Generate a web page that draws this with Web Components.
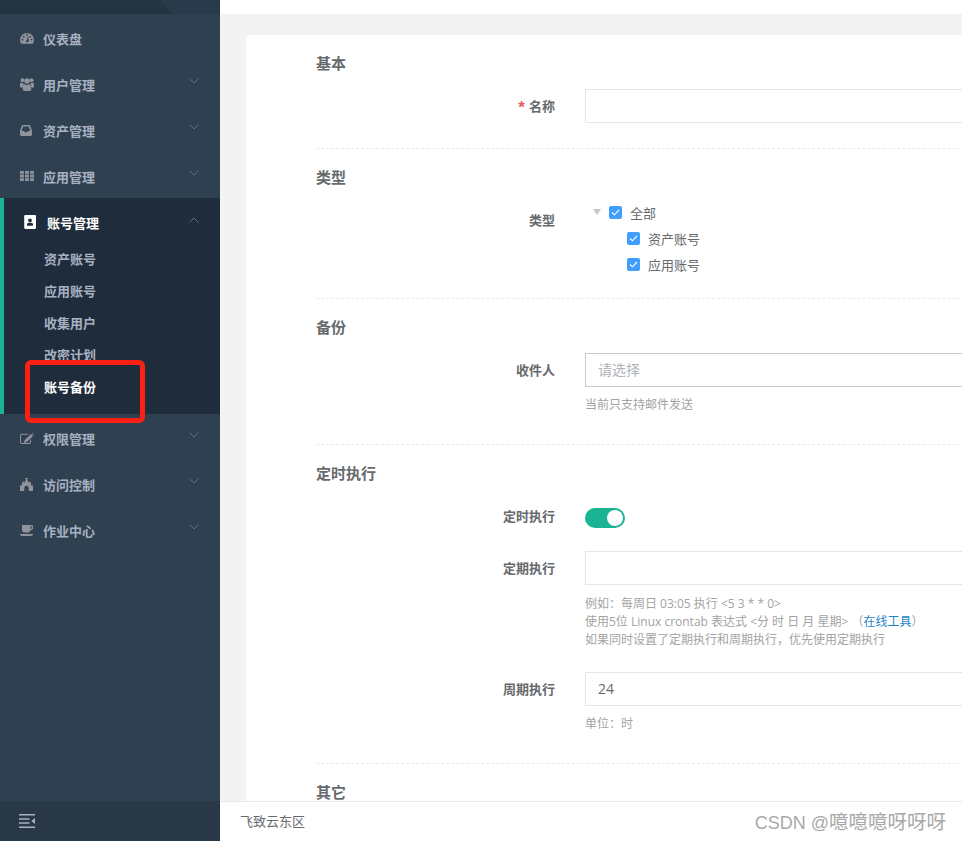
<!DOCTYPE html>
<html lang="zh">
<head>
<meta charset="utf-8">
<title>账号备份</title>
<style>
  html, body { margin: 0; height: 100%; overflow: hidden; background: #f3f3f4; }
  body { font-family: "Open Sans", "Noto Sans CJK SC", sans-serif; font-size: 13px; color: #676a6c; }
</style>
</head>
<body>
<template id="ico-dash"><svg viewBox="0 0 14 11" width="14" height="11" fill="currentColor"><path fill-rule="evenodd" d="M7 0a7 7 0 0 0-7 7c0 1.300.3 2.400 1 3.400.1.200.3.300.5.300h11c.2 0 .4-.1.500-.3.7-1 1-2.100 1-3.400a7 7 0 0 0-7-7zM2.500 7.600a.9.9 0 1 1 0-1.800.9.9 0 0 1 0 1.800zm1.300-3a.9.9 0 1 1 0-1.800.9.9 0 0 1 0 1.800zM7 2.600a.9.9 0 1 1 0-1.800.9.9 0 0 1 0 1.800zm1.100 6.300a1.200 1.200 0 0 1-2.100-.8c0-.5.4-.9.8-1.100l1-3.600h.7l-.1 3.700c.3.3.5.600.5 1 0 .3-.3.600-.8.800zm2.100-4.300a.9.9 0 1 1 0-1.800.9.9 0 0 1 0 1.800zm1.300 3a.9.9 0 1 1 0-1.800.9.9 0 0 1 0 1.800z"/></svg></template>
<template id="ico-users"><svg viewBox="0 0 14 13" width="14" height="13" fill="currentColor"><circle cx="2.500" cy="2.200" r="2"/><circle cx="11.500" cy="2.200" r="2"/><circle cx="7" cy="3" r="2.700"/><path d="M0 5h3.300c-.2 1 .3 2 1 2.600C3 8 2.300 8.800 2.200 9.800H1.200C.5 9.800 0 9.300 0 8.600zM14 5h-3.300c.2 1-.3 2-1 2.600 1.300.4 2 1.200 2.100 2.200h1c.7 0 1.200-.5 1.200-1.200zM4.700 6.300c.6.500 1.400.8 2.300.8s1.700-.3 2.300-.8c1.300.2 1.900 1.300 1.900 2.700v2.600c0 .8-.6 1.400-1.400 1.400H4.200c-.8 0-1.400-.6-1.400-1.400V9c0-1.400.6-2.500 1.900-2.700z"/></svg></template>
<template id="ico-inbox"><svg viewBox="0 0 12 11" width="12" height="11" fill="currentColor"><path fill-rule="evenodd" d="M3 0h6c.6 0 1.100.3 1.300.9L12 5.700v3.900c0 .8-.6 1.400-1.400 1.400H1.400C.6 11 0 10.400 0 9.600V5.700L1.700.9C1.900.3 2.400 0 3 0zm.3 1.500L1.700 6h2.500l.7 1.300h2.200L7.800 6h2.500L8.700 1.500z"/></svg></template>
<template id="ico-grid"><svg viewBox="0 0 14 10" width="14" height="10" fill="currentColor"><path d="M0 0h3.900v2.800H0zM5.050 0h3.900v2.800h-3.900zM10.100 0H14v2.800h-3.900zM0 3.600h3.900v2.800H0zM5.050 3.600h3.900v2.800h-3.900zM10.100 3.600H14v2.800h-3.900zM0 7.200h3.900V10H0zM5.050 7.200h3.900V10h-3.900zM10.100 7.200H14V10h-3.900z"/></svg></template>
<template id="ico-card"><svg viewBox="0 0 12 14" width="12" height="14" fill="currentColor"><path fill-rule="evenodd" d="M1.500 0h9.300c.7 0 1.200.5 1.200 1.200v11.600c0 .7-.5 1.200-1.200 1.200H1.500C.8 14 .2 13.500.2 12.800V1.200C.2.500.8 0 1.500 0zM6 3.400a1.900 1.900 0 1 0 0 3.800 1.900 1.900 0 0 0 0-3.800zM3 10.800h6V9.600c0-1-.7-1.800-1.700-1.800H4.700c-1 0-1.700.8-1.700 1.800z"/></svg></template>
<template id="ico-edit"><svg viewBox="0 0 14 11" width="14" height="11" fill="currentColor"><path d="M1.900.7h6.700l-1 1H1.900c-.5 0-.9.400-.9.900v6.500c0 .5.400.9.900.9h7.300c.5 0 .9-.4.900-.9V7l1-1v3.100c0 1.100-.8 1.900-1.900 1.900H1.900C.8 11 0 10.200 0 9.100V2.600C0 1.500.8.700 1.900.7z"/><path d="M11 .9l2 2-6.400 6.300-2.700.7.700-2.700zM11.700.2l.3-.2c.2-.1.400 0 .5.100l1.400 1.300c.2.200.2.400 0 .6l-.3.300z"/></svg></template>
<template id="ico-fort"><svg viewBox="0 0 13 13" width="13" height="13" fill="currentColor"><path fill-rule="evenodd" d="M5.300 0h2.400v1.200H7v1.300h1.200v1.900h.9v-1h1v1h1v3.100H13V13H8.700V10a2.200 2.200 0 0 0-4.400 0v3H0V7.500h1.900V4.400h1v-1h1v1h.9V2.500H6V1.200h-.7z"/></svg></template>
<template id="ico-coffee"><svg viewBox="0 0 13 11" width="13" height="11" fill="currentColor"><path fill-rule="evenodd" d="M2 0h10c.6 0 1 .4 1 1v2.300c0 1.100-.9 2-2 2h-.7C10 6.700 9 7.600 7.500 7.600h-2.800C3.200 7.600 2 6.500 2 5zm8.500 1.300v2.700h.5c.4 0 .7-.3.700-.7v-2zM0 9h13c0 1.100-.9 2-2 2H2C.9 11 0 10.100 0 9z"/></svg></template>

<template id="nav-item-tpl">
  <style>
    :host { display: block; }
    .row { height: 44px; padding-top: 2px; display: flex; align-items: center; color: #a7b1c2; font-size: 13px; font-weight: 700; padding-left: 20px; padding-right: 21px; }
    :host([active]) .row { color: #fff; }
    .ico { width: 23px; flex: none; display: flex; align-items: center; color: #8f939c; }
    :host([active]) .ico { color: #fff; }
    .label { flex: 1; }
    .chev { width: 10px; height: 6px; flex: none; color: #5f6f80; position: relative; top: -3px; }
    :host([active]) .chev { top: -2px; }
    .chev svg { display: block; }
  </style>
  <div class="row">
    <span class="ico"><slot name="icon"></slot></span>
    <span class="label"><slot></slot></span>
    <span class="chev" id="chev"></span>
  </div>
</template>

<template id="nav-group-tpl">
  <style>
    :host { display: block; background: #1f2c3b; border-left: 4px solid #1ab394; padding-bottom: 11px; }
    .subs { display: flex; flex-direction: column; margin-top: -1px; }
  </style>
  <slot name="head"></slot>
  <div class="subs"><slot></slot></div>
</template>

<template id="nav-sub-tpl">
  <style>
    :host { display: block; height: 32px; line-height: 32px; padding-left: 40px; font-size: 13px; font-weight: 700; color: #a7b1c2; }
    :host([current]) { color: #fff; }
  </style>
  <slot></slot>
</template>

<template id="side-bar-tpl">
  <style>
    :host { display: flex; flex-direction: column; width: 220px; flex: none; height: 100%; background: #2f4050; }
    .logo { height: 14px; flex: none; background: linear-gradient(47deg, #243443 0, #243443 126px, #293b4b 127px, #293b4b 100%); }
    nav { flex: 1; min-height: 0; }
    .foot { height: 40px; flex: none; background: #293846; display: flex; align-items: center; padding-left: 19px; color: #a7b1c2; }
  </style>
  <div class="logo"></div>
  <nav><slot></slot></nav>
  <div class="foot">
    <svg width="16" height="14" viewBox="0 0 16 14" fill="currentColor"><path d="M0 0h16v1.500H0zM0 4.200h10.500v1.500H0zM0 8.300h10.500v1.500H0zM0 12.500h16V14H0z"/><path d="M16 4.100v5.800L12.300 7z"/></svg>
  </div>
</template>

<template id="form-card-tpl">
  <style>
    :host { display: block; background: #fff; margin: 21px 0 0 26px; width: 900px; padding-left: 70px; border-radius: 4px 0 0 0; box-sizing: border-box; min-height: 900px; }
  </style>
  <slot></slot>
</template>

<template id="form-section-tpl">
  <style>
    :host { display: block; border-bottom: 1px dashed #e7eaec; padding-bottom: 7px; }
    :host(:last-child) { border-bottom: 0; }
    h3 { margin: 0 0 16px; padding-top: 18px; font-size: 15px; line-height: 20px; font-weight: 700; color: #676a6c; }
  </style>
  <h3 id="title"></h3>
  <slot></slot>
</template>

<template id="form-row-tpl">
  <style>
    :host { display: grid; grid-template-columns: 239px 1fr; column-gap: 30px; margin-bottom: 18px; }
    .label { text-align: right; font-size: 13px; font-weight: 700; line-height: 20px; padding-top: 7px; color: #676a6c; }
    .star { color: #f0596b; font: 700 17px/0 "Liberation Sans", sans-serif; margin-right: 4px; vertical-align: -2px; }
    .help { display: none; font-size: 12px; line-height: 18px; color: #a3a3a3; margin: 9px 0 5px; }
    :host([help]) .help { display: block; }
    :host([help="wide"]) .help { margin-top: 10px; }
  </style>
  <div class="label"><span class="star" id="star">*</span><span id="text"></span></div>
  <div><slot></slot><div class="help"><slot name="help"></slot></div></div>
</template>

<template id="text-input-tpl">
  <style>
    :host { display: block; box-sizing: border-box; height: 34px; border: 1px solid #e5e6e7; padding: 0 12px; font-size: 14px; line-height: 32px; color: #676a6c; background: #fff; }
    :host([strong]) { border-color: #c9cacc; }
    .ph { color: #b0b3b8; }
  </style>
  <span id="v"></span>
</template>

<template id="tree-node-tpl">
  <style>
    :host { display: flex; align-items: center; height: 26px; font-size: 13px; color: #676a6c; }
    .caret { width: 0; height: 0; border: 4px solid transparent; border-top: 6px solid #c5c8ce; border-bottom: 0; margin: 0 8px 0 8px; }
    .box { width: 13px; height: 13px; border-radius: 2px; background: #409eff; flex: none; margin-right: 8px; display: flex; align-items: center; justify-content: center; }
    :host([child]) .box { margin-left: 42px; }
  </style>
  <span class="caret" id="caret"></span>
  <span class="box"><svg width="9" height="7" viewBox="0 0 9 7" fill="none" stroke="#fff" stroke-width="1.100"><path d="M1 3.500l2.400 2.300L8 1"/></svg></span>
  <slot></slot>
</template>

<template id="toggle-switch-tpl">
  <style>
    :host { display: block; width: 40px; height: 20px; border-radius: 10px; background: #1ab394; position: relative; margin-top: 9px; margin-bottom: 5px; }
    i { position: absolute; right: 2px; top: 2px; width: 16px; height: 16px; border-radius: 50%; background: #fff; }
  </style>
  <i></i>
</template>

<script>
function makeEl(tag, tplId, setup) {
    customElements.define(tag, class extends HTMLElement {
        constructor() {
            super();
            this.attachShadow({ mode: 'open' });
            this.shadowRoot.appendChild(document.getElementById(tplId).content.cloneNode(true));
        }
        connectedCallback() {
            if (setup) setup(this, this.shadowRoot);
        }
    });
}

const icons = { dash: 'ico-dash', users: 'ico-users', inbox: 'ico-inbox', grid: 'ico-grid', card: 'ico-card', edit: 'ico-edit', fort: 'ico-fort', coffee: 'ico-coffee' };

makeEl('nav-item', 'nav-item-tpl', (el, root) => {
    const name = el.getAttribute('icon');
    if (name && !el.querySelector('[slot=icon]')) {
        const holder = document.createElement('span');
        holder.slot = 'icon';
        holder.style.display = 'flex';
        holder.appendChild(document.getElementById(icons[name]).content.cloneNode(true));
        el.appendChild(holder);
    }
    const dir = el.getAttribute('chevron');
    if (dir) {
        const d = dir === 'up' ? 'M.5 5.500L5 1l4.500 4.500' : 'M.5 .5L5 5l4.500-4.500';
        root.getElementById('chev').innerHTML = `<svg width="10" height="6" viewBox="0 0 10 6" fill="none" stroke="currentColor"><path d="${d}"/></svg>`;
    }
});
makeEl('nav-group', 'nav-group-tpl');
makeEl('nav-sub', 'nav-sub-tpl');
makeEl('side-bar', 'side-bar-tpl');
makeEl('form-card', 'form-card-tpl');
makeEl('form-section', 'form-section-tpl', (el, root) => {
    root.getElementById('title').textContent = el.getAttribute('title-text');
});
makeEl('form-row', 'form-row-tpl', (el, root) => {
    root.getElementById('text').textContent = el.getAttribute('label');
    if (!el.hasAttribute('required')) root.getElementById('star').remove();
});
makeEl('text-input', 'text-input-tpl', (el, root) => {
    const v = root.getElementById('v');
    if (el.hasAttribute('placeholder')) { v.className = 'ph'; v.textContent = el.getAttribute('placeholder'); }
    else v.textContent = el.getAttribute('value') || '';
});
makeEl('tree-node', 'tree-node-tpl', (el, root) => {
    if (el.hasAttribute('child')) root.getElementById('caret').remove();
});
makeEl('toggle-switch', 'toggle-switch-tpl');

customElements.define('app-shell', class extends HTMLElement {
    constructor() {
        super();
        this.attachShadow({ mode: 'open' }).innerHTML = `
            <style>
                :host { display: flex; height: 841px; width: 962px; position: relative; overflow: hidden; }
                .main { flex: 1; min-width: 0; display: flex; flex-direction: column; }
                .top { height: 14px; background: #fff; flex: none; }
                .body { flex: 1; min-height: 0; overflow: hidden; background: #f3f3f4; }
                .foot { height: 40px; flex: none; box-sizing: border-box; border-top: 1px solid #e7eaec; background: #fff; padding-left: 20px; line-height: 39px; font-size: 13px; color: #676a6c; }
                .mark { position: absolute; right: 16px; top: 808px; font: 18px/28px "Liberation Sans", "Noto Sans CJK SC", sans-serif; color: #a9a9a9; white-space: nowrap; }
                .mark span { font-size: 19.500px; }
                .callout { position: absolute; left: 25px; top: 360px; width: 120px; height: 63px; box-sizing: border-box; border: 5px solid #fb2014; border-radius: 6px; }
            </style>
            <slot name="side"></slot>
            <div class="main">
                <div class="top"></div>
                <div class="body"><slot></slot></div>
                <div class="foot"><slot name="foot"></slot></div>
            </div>
            <div class="mark">CSDN @<span>噫噫噫呀呀呀</span></div>
            <div class="callout"></div>`;
    }
});
</script>

<app-shell>
  <side-bar slot="side">
    <nav-item icon="dash">仪表盘</nav-item>
    <nav-item icon="users" chevron="down">用户管理</nav-item>
    <nav-item icon="inbox" chevron="down">资产管理</nav-item>
    <nav-item icon="grid" chevron="down">应用管理</nav-item>
    <nav-group>
      <nav-item slot="head" icon="card" chevron="up" active>账号管理</nav-item>
      <nav-sub>资产账号</nav-sub>
      <nav-sub>应用账号</nav-sub>
      <nav-sub>收集用户</nav-sub>
      <nav-sub>改密计划</nav-sub>
      <nav-sub current>账号备份</nav-sub>
    </nav-group>
    <nav-item icon="edit" chevron="down">权限管理</nav-item>
    <nav-item icon="fort" chevron="down">访问控制</nav-item>
    <nav-item icon="coffee" chevron="down">作业中心</nav-item>
  </side-bar>

  <form-card>
    <form-section title-text="基本">
      <form-row label="名称" required><text-input></text-input></form-row>
    </form-section>
    <form-section title-text="类型">
      <form-row label="类型">
        <div style="margin:-4px 0 -4px">
          <tree-node>全部</tree-node>
          <tree-node child>资产账号</tree-node>
          <tree-node child>应用账号</tree-node>
        </div>
      </form-row>
    </form-section>
    <form-section title-text="备份">
      <form-row label="收件人" help>
        <text-input placeholder="请选择" strong></text-input>
        <span slot="help">当前只支持邮件发送</span>
      </form-row>
    </form-section>
    <form-section title-text="定时执行">
      <form-row label="定时执行"><toggle-switch></toggle-switch></form-row>
      <form-row label="定期执行" help="wide">
        <text-input></text-input>
        <span slot="help">例如：每周日 03:05 执行 &lt;5 3 * * 0&gt;<br>使用5位 Linux crontab 表达式 &lt;分 时 日 月 星期&gt; （<a href="#" style="color:#1c84c6;text-decoration:none">在线工具</a>）<br>如果同时设置了定期执行和周期执行，优先使用定期执行</span>
      </form-row>
      <form-row label="周期执行" help>
        <text-input value="24"></text-input>
        <span slot="help">单位：时</span>
      </form-row>
    </form-section>
    <form-section title-text="其它"></form-section>
  </form-card>
  <span slot="foot">飞致云东区</span>
</app-shell>
</body>
</html>
